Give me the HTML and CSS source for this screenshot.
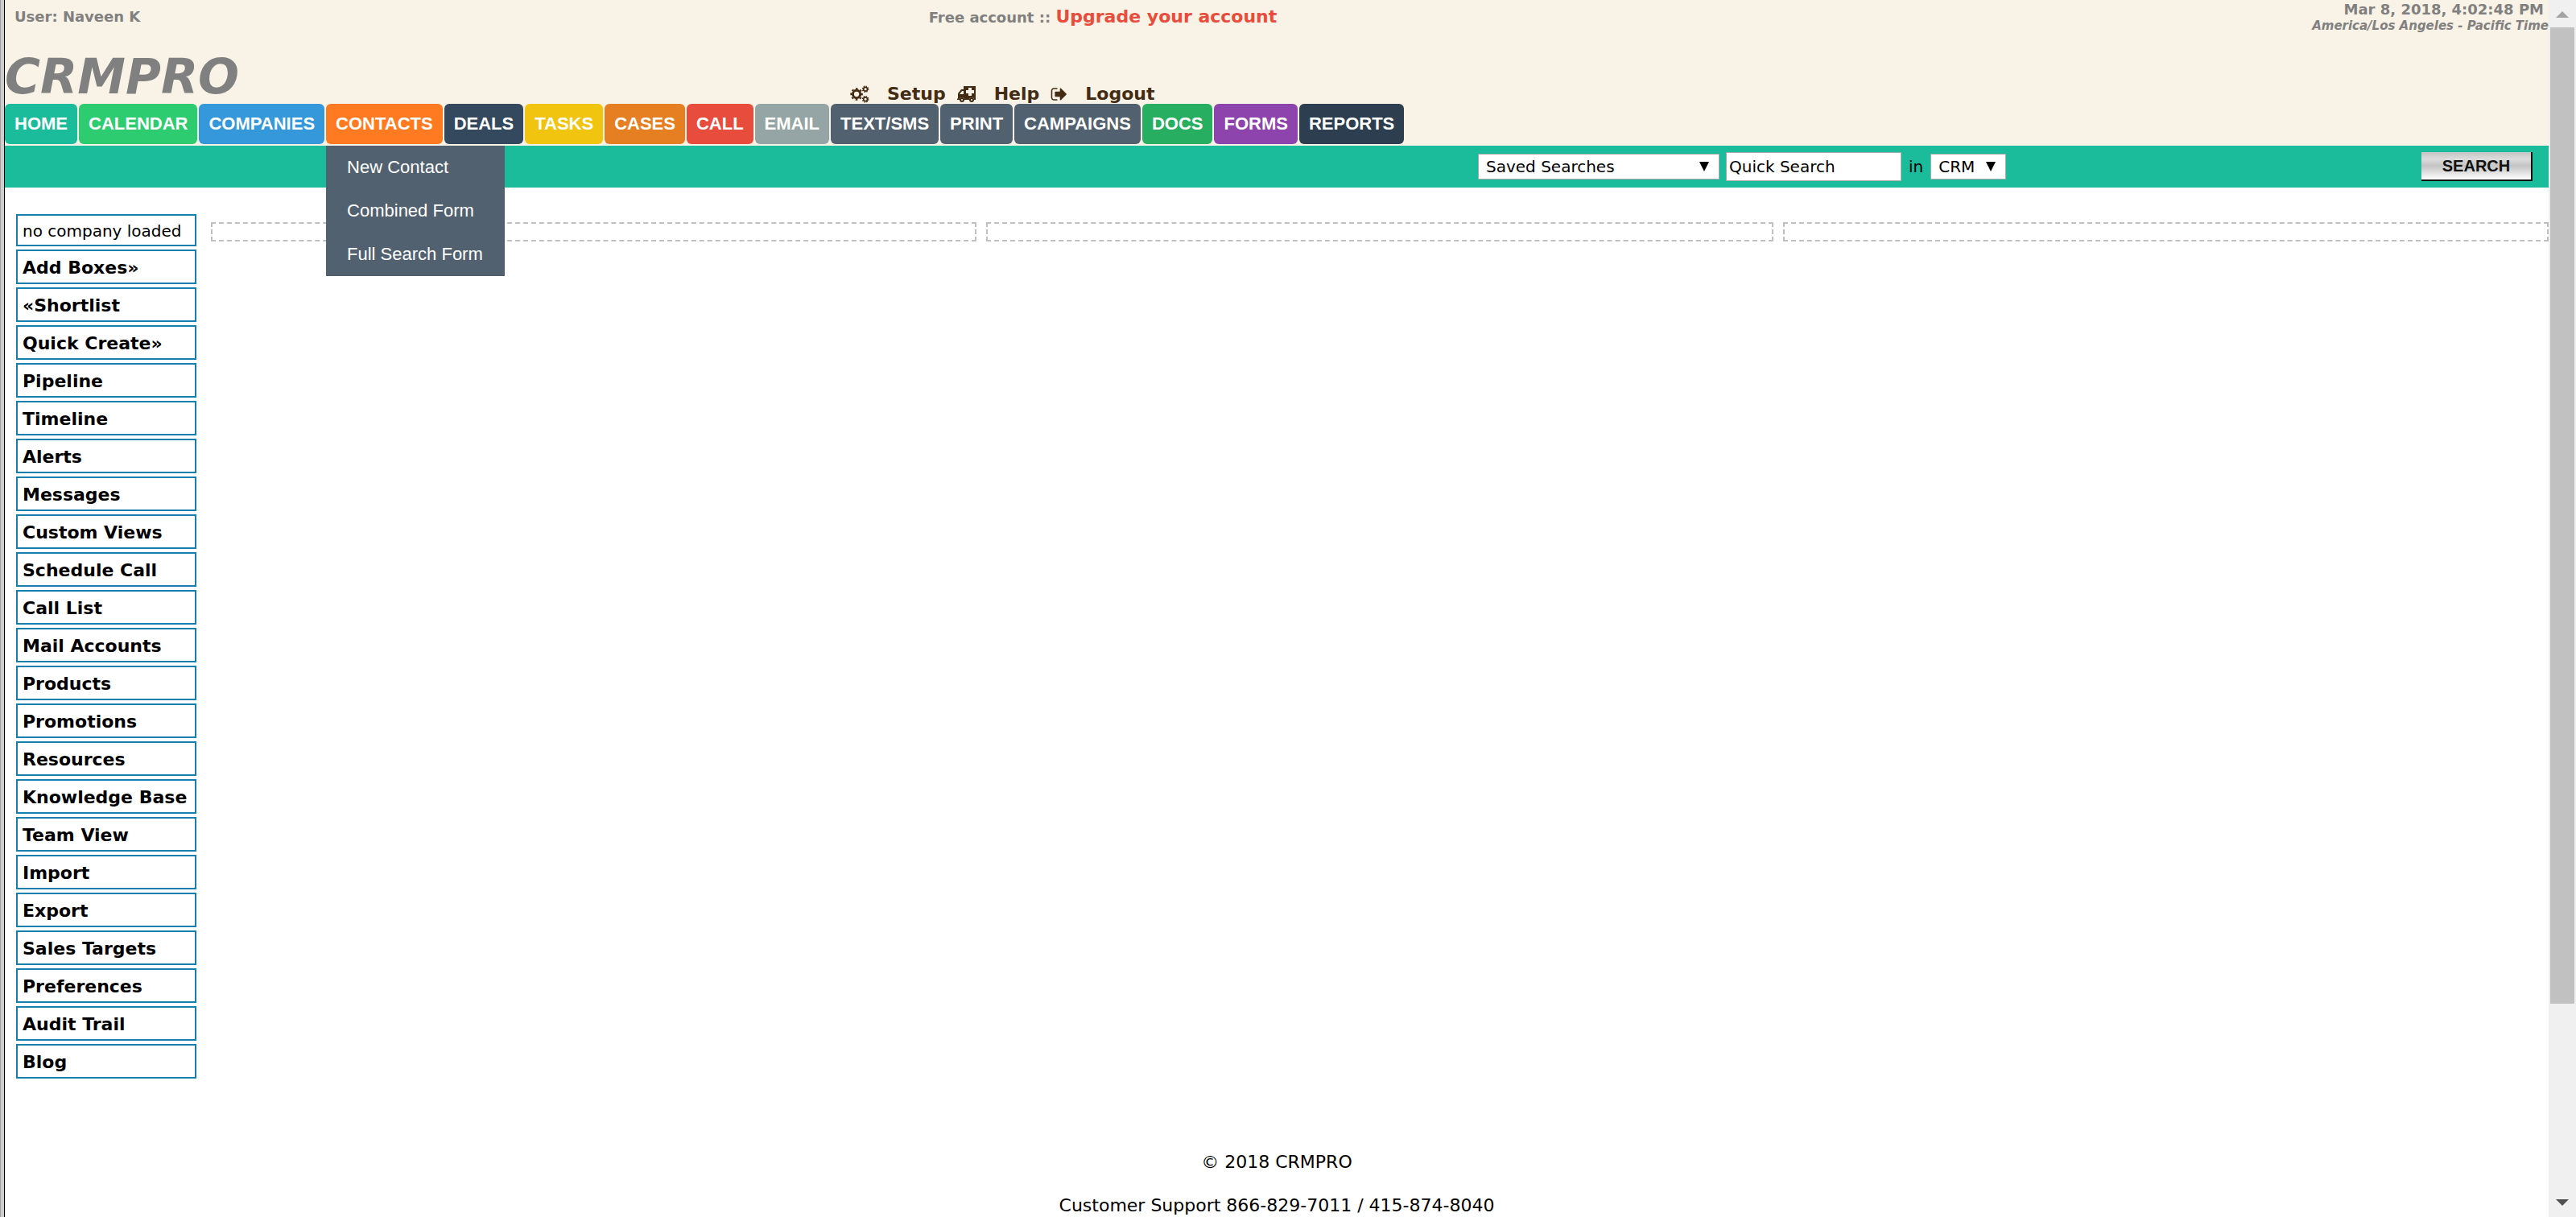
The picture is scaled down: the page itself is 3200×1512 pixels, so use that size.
FILE: index.html
```html
<!DOCTYPE html>
<html lang="en">
<head>
<meta charset="utf-8">
<title>CRMPRO</title>
<link rel="stylesheet" href="styles.css">
</head>
<body>
<div class="window">
  <div class="frame-edge"></div>
  <div class="page">
    <header class="header">
      <div class="top-row">
        <div class="user">User: Naveen K</div>
        <div class="account">Free account :: <a href="#" class="upgrade">Upgrade your account</a></div>
        <div class="clock">
          <div class="date">Mar 8, 2018, 4:02:48 PM</div>
          <div class="zone">America/Los Angeles - Pacific Time</div>
        </div>
      </div>
      <div class="brand-row">
        <div class="logo">CRMPRO</div>
        <div class="tools">
          <a href="#" class="tool">
            <svg class="tool-icon" viewBox="0 0 1920 1792" fill="none" stroke="currentColor">
              <circle cx="640" cy="896" r="378" stroke-width="244"/>
              <circle cx="640" cy="896" r="560" stroke-width="150" stroke-dasharray="220 220" stroke-dashoffset="110"/>
              <circle cx="1536" cy="384" r="194" stroke-width="132"/>
              <circle cx="1536" cy="384" r="300" stroke-width="110" stroke-dasharray="118 118"/>
              <circle cx="1536" cy="1408" r="194" stroke-width="132"/>
              <circle cx="1536" cy="1408" r="300" stroke-width="110" stroke-dasharray="118 118"/>
            </svg>
            <span>Setup</span>
          </a>
          <a href="#" class="tool">
            <svg class="tool-icon" viewBox="0 0 24 22" fill="currentColor" fill-rule="evenodd">
              <path d="M8 1h15v17h-2a3 3 0 0 0-6 0H9a3 3 0 0 0-6 0H0v-1l1-1v-6l4-5h3zM3 11h5V7H6zM14 3v3h-3v4h3v3h4v-3h3V6h-3V3z"/>
              <path d="M6 15a3 3 0 1 1 0 6 3 3 0 0 1 0-6zm0 2a1 1 0 1 0 0 2 1 1 0 0 0 0-2zM18 15a3 3 0 1 1 0 6 3 3 0 0 1 0-6zm0 2a1 1 0 1 0 0 2 1 1 0 0 0 0-2z"/>
            </svg>
            <span>Help</span>
          </a>
          <a href="#" class="tool">
            <svg class="tool-icon tool-icon-exit" viewBox="64 0 1600 1792" fill="currentColor">
              <path d="M704 1440q0 4 1 20t.5 26.500-3 23.500-10 19.500-20.500 6.500h-320q-119 0-203.500-84.500t-84.500-203.500v-704q0-119 84.500-203.500t203.500-84.500h320q13 0 22.500 9.500t9.500 22.500q0 4 1 20t.5 26.500-3 23.500-10 19.500-20.500 6.500h-320q-66 0-113 47t-47 113v704q0 66 47 113t113 47h312q32 0 32 32zm928-544q0 26-19 45l-544 544q-19 19-45 19t-45-19-19-45v-288h-448q-26 0-45-19t-19-45v-384q0-26 19-45t45-19h448v-288q0-26 19-45t45-19 45 19l544 544q19 19 19 45z"/>
            </svg>
            <span>Logout</span>
          </a>
        </div>
      </div>
      <nav class="tabs">
        <a href="#" class="tab home">HOME</a>
        <a href="#" class="tab calendar">CALENDAR</a>
        <a href="#" class="tab companies">COMPANIES</a>
        <div class="tab-group">
          <a href="#" class="tab contacts">CONTACTS</a>
          <div class="menu">
            <a href="#">New Contact</a>
            <a href="#">Combined Form</a>
            <a href="#">Full Search Form</a>
          </div>
        </div>
        <a href="#" class="tab deals">DEALS</a>
        <a href="#" class="tab tasks">TASKS</a>
        <a href="#" class="tab cases">CASES</a>
        <a href="#" class="tab call">CALL</a>
        <a href="#" class="tab email">EMAIL</a>
        <a href="#" class="tab slate">TEXT/SMS</a>
        <a href="#" class="tab slate">PRINT</a>
        <a href="#" class="tab slate">CAMPAIGNS</a>
        <a href="#" class="tab docs">DOCS</a>
        <a href="#" class="tab forms">FORMS</a>
        <a href="#" class="tab reports">REPORTS</a>
      </nav>
    </header>

    <form class="search-bar">
      <div class="search-fields">
        <span class="picker">
          <select class="select saved" aria-label="Saved searches"><option>Saved Searches</option></select>
        </span>
        <input class="quick" type="text" value="Quick Search" aria-label="Quick search">
        <label class="in" for="scope">in</label>
        <span class="picker">
          <select class="select scope" id="scope"><option>CRM</option></select>
        </span>
      </div>
      <button class="search-button" type="button">SEARCH</button>
    </form>

    <main class="main">
      <nav class="sidebar">
        <div class="side-item loaded">no company loaded</div>
        <a href="#" class="side-item">Add Boxes»</a>
        <a href="#" class="side-item">«Shortlist</a>
        <a href="#" class="side-item">Quick Create»</a>
        <a href="#" class="side-item">Pipeline</a>
        <a href="#" class="side-item">Timeline</a>
        <a href="#" class="side-item">Alerts</a>
        <a href="#" class="side-item">Messages</a>
        <a href="#" class="side-item">Custom Views</a>
        <a href="#" class="side-item">Schedule Call</a>
        <a href="#" class="side-item">Call List</a>
        <a href="#" class="side-item">Mail Accounts</a>
        <a href="#" class="side-item">Products</a>
        <a href="#" class="side-item">Promotions</a>
        <a href="#" class="side-item">Resources</a>
        <a href="#" class="side-item">Knowledge Base</a>
        <a href="#" class="side-item">Team View</a>
        <a href="#" class="side-item">Import</a>
        <a href="#" class="side-item">Export</a>
        <a href="#" class="side-item">Sales Targets</a>
        <a href="#" class="side-item">Preferences</a>
        <a href="#" class="side-item">Audit Trail</a>
        <a href="#" class="side-item">Blog</a>
      </nav>
      <div class="boxes">
        <div class="box"></div>
        <div class="box"></div>
        <div class="box"></div>
      </div>
    </main>

    <footer class="footer">
      <div>© 2018 CRMPRO</div>
      <div>Customer Support 866-829-7011 / 415-874-8040</div>
    </footer>
  </div>
  <div class="scrollbar">
    <svg class="arrow arrow-up" viewBox="0 0 16 8"><path d="M0 8L8 0l8 8z"/></svg>
    <div class="track"><div class="thumb"></div></div>
    <svg class="arrow arrow-down" viewBox="0 0 16 8"><path d="M0 0h16L8 8z"/></svg>
  </div>
</div>
</body>
</html>
```
FILE: styles.css
```css
* {
  box-sizing: border-box;
}

body {
  margin: 0;
  background: #fff;
  color: #000;
  font: 22px/26px "DejaVu Sans", Verdana, sans-serif;
}

a {
  color: inherit;
  text-decoration: none;
}

.window {
  display: flex;
  height: 100vh;
  overflow: hidden;
}

.frame-edge {
  flex: none;
  width: 6px;
  background: #cecece;
  border-left: 1px solid #a0a0a0;
  border-right: 1px solid #000;
}

.page {
  flex: 1;
  min-width: 0;
}

/* Header */

.header {
  background: #f9f2e6;
  padding-bottom: 2px;
}

.top-row {
  display: grid;
  grid-template-columns: 1fr auto 1fr;
  height: 62px;
  color: #808080;
  font-size: 18px;
  font-weight: bold;
}

.user {
  padding: 8px 12px;
}

.account {
  padding: 8px 432px 0 0;
}

.upgrade {
  color: #e74c3c;
  font-size: 22px;
}

.clock {
  text-align: right;
  line-height: 20px;
  padding-top: 2px;
}

.date {
  padding-right: 6px;
}

.zone {
  font-size: 15px;
  font-style: italic;
}

.brand-row {
  display: flex;
  align-items: flex-end;
  height: 67px;
}

.logo {
  width: 1050px;
  color: #808080;
  font-size: 60px;
  font-style: italic;
  font-weight: bold;
  line-height: 68px;
}

.tools {
  display: flex;
  gap: 14px;
  color: #432c13;
  font-weight: bold;
  line-height: 24px;
}

.tool {
  display: flex;
  align-items: center;
  gap: 22px;
}

.tool-icon {
  width: 24px;
  height: 22px;
}

.tool-icon-exit {
  width: 21px;
}

.tabs {
  display: flex;
  gap: 2px;
}

.tab {
  display: block;
  padding: 0 12px;
  border-radius: 6px;
  color: #fff;
  font: bold 22px/50px "Liberation Sans", Arial, sans-serif;
}

.home { background: #1abc9c; }
.calendar { background: #2ecc71; }
.companies { background: #3498db; }
.contacts { background: #ff7a20; }
.deals { background: #34495e; }
.tasks { background: #f1c40f; }
.cases { background: #e67e22; }
.call { background: #e74c3c; }
.email { background: #95a5a6; }
.slate { background: #526170; }
.docs { background: #27ae60; }
.forms { background: #8e44ad; }
.reports { background: #2c3e50; }

.tab-group {
  position: relative;
}

.menu {
  position: absolute;
  top: 52px;
  left: 0;
  z-index: 1;
  width: 222px;
  background: #526170;
  color: #fff;
  font: 22px/54px "Liberation Sans", Arial, sans-serif;
}

.menu a {
  display: block;
  padding-left: 26px;
}

/* Search bar */

.search-bar {
  display: flex;
  align-items: center;
  justify-content: space-between;
  height: 52px;
  padding: 0 20px 0 1830px;
  background: #1abc9c;
  font-size: 20px;
}

.search-fields {
  display: flex;
  align-items: center;
}

.picker {
  position: relative;
}

.picker::after {
  content: "";
  position: absolute;
  top: 10px;
  right: 13px;
  border: solid transparent;
  border-width: 12px 6px 0;
  border-top-color: #000;
  pointer-events: none;
}

.select,
.quick {
  display: block;
  margin: 0;
  border: 1px solid #a9a9a9;
  border-radius: 0;
  background: #fff;
  color: #000;
  font: 20px/26px "DejaVu Sans", Verdana, sans-serif;
}

.select {
  height: 32px;
  padding: 0 9px;
  appearance: none;
}

.saved {
  width: 300px;
}

.scope {
  width: 94px;
}

.quick {
  width: 218px;
  height: 36px;
  margin-left: 8px;
  padding: 0 3px;
}

.in {
  padding: 0 9px;
}

.search-button {
  width: 138px;
  height: 36px;
  padding: 0;
  border: solid #111;
  border-width: 0 2px 2px 0;
  border-radius: 0;
  background: linear-gradient(#c4c4c4, #dcdcdc 25%, #c4c4c4 50%, #fff);
  color: #111;
  font: bold 20px/34px "Liberation Sans", Arial, sans-serif;
}

/* Body */

.main {
  display: flex;
  align-items: flex-start;
  gap: 18px;
  padding: 33px 0 0 14px;
}

.sidebar {
  flex: none;
  display: flex;
  flex-direction: column;
  gap: 4px;
  width: 224px;
}

.side-item {
  height: 43px;
  padding: 0 6px;
  border: 2px solid #177fae;
  font-weight: bold;
  line-height: 41px;
}

.loaded {
  height: 40px;
  font-size: 20px;
  font-weight: normal;
  line-height: 38px;
}

.boxes {
  flex: 1;
  display: grid;
  grid-template-columns: 34fr 35fr 34fr;
  gap: 12px;
  padding-top: 10px;
}

.box {
  height: 24px;
  border: 2px dashed #c0c0c0;
}

.footer {
  display: grid;
  gap: 28px;
  padding-top: 91px;
  text-align: center;
}

/* Window scrollbar */

.scrollbar {
  flex: none;
  display: flex;
  flex-direction: column;
  align-items: center;
  width: 34px;
  padding: 14px 0;
  background: #f0f0f0;
}

.arrow {
  flex: none;
  width: 16px;
  height: 8px;
}

.arrow-up { fill: #a3a3a3; }
.arrow-down { fill: #505050; }

.track {
  flex: 1;
  width: 30px;
  padding: 12px 0;
}

.thumb {
  height: 84%;
  background: #c1c1c1;
}
```
